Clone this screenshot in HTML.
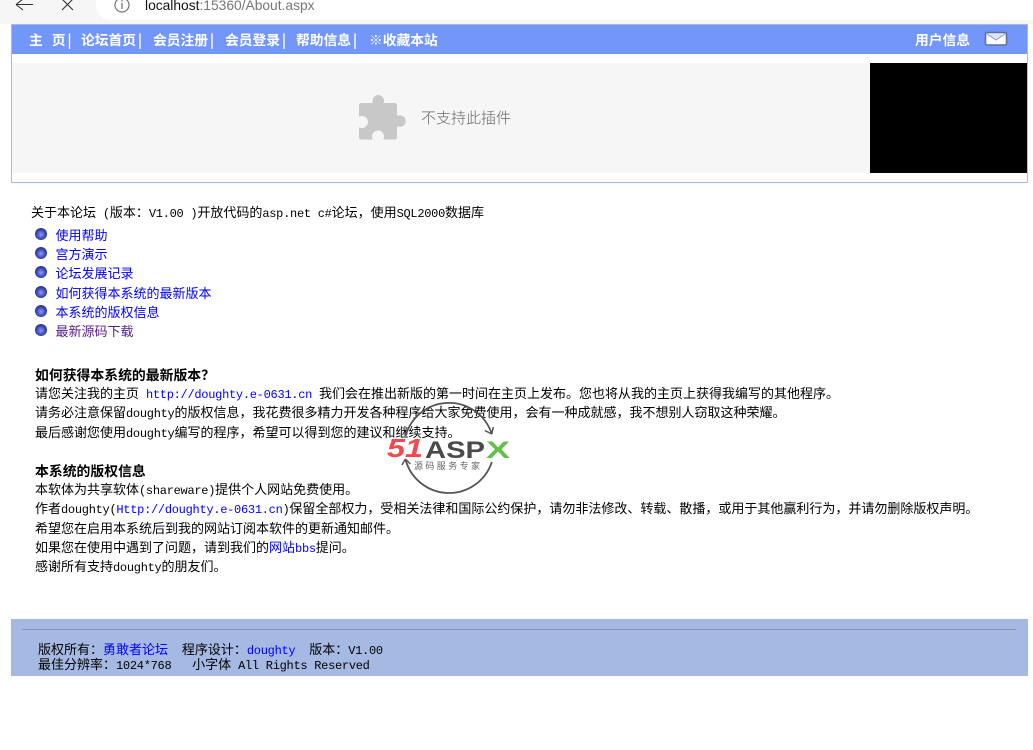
<!DOCTYPE html>
<html lang="zh-CN">
<head>
<meta charset="utf-8">
<title>About</title>
<style>
html,body{margin:0;padding:0;background:#fff;width:1033px;height:750px;overflow:hidden}
body{position:relative;font-family:"Liberation Mono","WenQuanYi Zen Hei","Noto Sans CJK SC",monospace;font-size:13px;color:#000}
.a{position:absolute;white-space:nowrap;line-height:16px;height:16px}
.c{font-family:"WenQuanYi Zen Hei","Noto Sans CJK SC",sans-serif;font-size:13px}
.m{font-family:"Liberation Mono",monospace;font-size:12px;letter-spacing:-.28px}
.t{font-size:13.85px;font-weight:bold}
a{color:#00f;text-decoration:none}
.v{color:#551a8b}
.n{position:absolute;top:31px;color:#fff;font-weight:bold;font-size:13.75px;line-height:16px;white-space:nowrap;font-family:"WenQuanYi Zen Hei","Noto Sans CJK SC",sans-serif}
.n i{font-style:normal;margin-left:2px}
.b{position:absolute;left:35px;width:12px;height:12px;border-radius:50%;background:radial-gradient(circle at 50% 55%,#8f9cf0 0,#3f4fc0 45%,#23285f 80%,#8a8a9a 100%)}
.x{position:absolute}
</style>
</head>
<body>
<div class="x" style="left:0;top:0;width:1033px;height:24px;background:#f6f6f6"></div>
<div class="x" style="left:96px;top:-10px;width:937px;height:30px;background:#fff;border-radius:14px 0 0 14px"></div>
<div class="x" style="left:0;top:24px;width:1033px;height:726px;background:#fff;border-radius:8px 8px 0 0"></div>
<svg class="x" style="left:0;top:0" width="130" height="20" viewBox="0 0 130 20"><path d="M16 4.500H33M16 4.500L23 -1M16 4.500L23 10" fill="none" stroke="#333" stroke-width="1.100"/><path d="M62 -1L73 10M73 -1L62 10" fill="none" stroke="#333" stroke-width="1.100"/><circle cx="122" cy="5" r="7" fill="none" stroke="#777" stroke-width="1.200"/><path d="M122 3V9M122 0V1.500" stroke="#777" stroke-width="1.300"/></svg>
<div class="a" style="left:145px;top:-2px;font:13.8px/16px 'Liberation Sans',sans-serif;color:#777"><span style="color:#111">localhost</span>:15360/About.aspx</div>

<div class="x" style="left:11px;top:24px;width:1015px;height:157px;border:1px solid #a5b9e3;background:#fff"></div>
<div class="x" style="left:12px;top:25px;width:1015px;height:29px;background:#7396fb"></div>
<div class="n" style="left:29px">主<span style="display:inline-block;width:9px"></span>页<i>|</i></div>
<div class="n" style="left:81px">论坛首页<i>|</i></div>
<div class="n" style="left:153px">会员注册<i>|</i></div>
<div class="n" style="left:225px">会员登录<i>|</i></div>
<div class="n" style="left:296px">帮助信息<i>|</i></div>
<div class="n" style="left:369px">※收藏本站</div>
<div class="n" style="left:915px">用户信息</div>
<svg class="x" style="left:984px;top:31px" width="24" height="15" viewBox="0 0 24 15"><rect x="1.500" y="1.500" width="21" height="12.500" rx="1.500" fill="#fff" stroke="#5f6f9f" stroke-width="1.600"/><path d="M2.500 2.500L12 9L21.500 2.500" fill="#dfe5f6" stroke="#8e9dd0"/></svg>

<div class="x" style="left:12px;top:63px;width:858px;height:110px;background:#f6f6f6"></div>
<div class="x" style="left:870px;top:63px;width:157px;height:110px;background:#000"></div>
<svg class="x" style="left:358px;top:93px" width="48" height="48" viewBox="358 93 48 48"><path d="M361.500 103H373C372.500 102 372.500 101 372.500 100A5.800 5.800 0 0 1 384 100C384 101 384 102 383.500 103H394.500C396 103 397 104 397 105.500V115.700C398 115.400 398.500 115.400 400 115.400A5.700 5.700 0 0 1 400 126.800C398.500 126.800 398 126.800 397 126.500V137C397 138.500 396 139.500 394.500 139.500H383.200A6 6 0 1 0 372.800 139.500H361.500C360 139.500 359 138.500 359 137V127.200A6 6 0 1 0 359 116.800V105.500C359 104 360 103 361.500 103Z" fill="#c8c8c8"/></svg>
<div class="a" style="left:421px;top:110px;font:15px/16px 'Noto Sans CJK SC',sans-serif;font-weight:300;color:#666">不支持此插件</div>

<div class="a c" style="left:31px;top:204px">关于本论坛<span class="m">&nbsp;(</span>版本：<span class="m">V1.00&nbsp;)</span>开放代码的<span class="m">asp.net&nbsp;c#</span>论坛，使用<span class="m">SQL2000</span>数据库</div>

<div class="b" style="top:228px"></div>
<div class="b" style="top:247px"></div>
<div class="b" style="top:266px"></div>
<div class="b" style="top:286px"></div>
<div class="b" style="top:305px"></div>
<div class="b" style="top:324px"></div>
<div class="a c" style="left:55.500px;top:227px"><a href="#">使用帮助</a></div>
<div class="a c" style="left:55.500px;top:246px"><a href="#">宫方演示</a></div>
<div class="a c" style="left:55.500px;top:265px"><a href="#">论坛发展记录</a></div>
<div class="a c" style="left:55.500px;top:285px"><a href="#">如何获得本系统的最新版本</a></div>
<div class="a c" style="left:55.500px;top:304px"><a href="#">本系统的版权信息</a></div>
<div class="a c" style="left:55.500px;top:323px"><a href="#" class="v">最新源码下载</a></div>

<div class="a c t" style="left:35px;top:366px">如何获得本系统的最新版本？</div>
<div class="a c" style="left:35px;top:385px">请您关注我的主页<span class="m">&nbsp;</span><a href="#" class="m">http://doughty.e-0631.cn</a><span class="m">&nbsp;</span>我们会在推出新版的第一时间在主页上发布。您也将从我的主页上获得我编写的其他程序。</div>
<div class="a c" style="left:35px;top:404px">请务必注意保留<span class="m">doughty</span>的版权信息，我花费很多精力开发各种程序给大家免费使用，会有一种成就感，我不想别人窃取这种荣耀。</div>
<div class="a c" style="left:35px;top:424px">最后感谢您使用<span class="m">doughty</span>编写的程序，希望可以得到您的建议和继续支持。</div>

<div class="a c t" style="left:35px;top:462px">本系统的版权信息</div>
<div class="a c" style="left:35px;top:481px">本软体为共享软体<span class="m">(shareware)</span>提供个人网站免费使用。</div>
<div class="a c" style="left:35px;top:500px">作者<span class="m">doughty(</span><a href="#" class="m">Http://doughty.e-0631.cn</a><span class="m">)</span>保留全部权力，受相关法律和国际公约保护，请勿非法修改、转载、散播，或用于其他赢利行为，并请勿删除版权声明。</div>
<div class="a c" style="left:35px;top:520px">希望您在启用本系统后到我的网站订阅本软件的更新通知邮件。</div>
<div class="a c" style="left:35px;top:539px">如果您在使用中遇到了问题，请到我们的<a href="#">网站<span class="m">bbs</span></a>提问。</div>
<div class="a c" style="left:35px;top:558px">感谢所有支持<span class="m">doughty</span>的朋友们。</div>

<svg class="x" style="left:380px;top:395px" width="140" height="105" viewBox="380 395 140 105">
<path d="M405.600 436A45 45 0 0 1 491.800 434" fill="none" stroke="#555" stroke-width="1.800"/>
<path d="M491.800 434l1.500-7M491.800 434l-7-3.500" fill="none" stroke="#555" stroke-width="1.500"/>
<path d="M491.800 462A45 45 0 0 1 405.400 459" fill="none" stroke="#555" stroke-width="1.800"/>
<path d="M405.400 459l-3.500 6M405.400 459l5 5" fill="none" stroke="#555" stroke-width="1.500"/>
<text x="387" y="457" font-family="Liberation Sans" font-size="26" font-weight="bold" font-style="italic" fill="#f04a4e" textLength="36" lengthAdjust="spacingAndGlyphs">51</text>
<text x="425" y="458" font-family="Liberation Sans" font-size="24" font-weight="bold" fill="#4a4a4a" textLength="60" lengthAdjust="spacingAndGlyphs">ASP</text>
<text x="486" y="458" font-family="Liberation Sans" font-size="24" font-weight="bold" fill="#62c04a" textLength="24" lengthAdjust="spacingAndGlyphs">X</text>
<text x="414" y="469" font-family="Noto Sans CJK SC" font-size="9" fill="#666" textLength="66">源码服务专家</text>
</svg>

<div class="x" style="left:11px;top:619px;width:1017px;height:57px;background:#a5b9e3"></div>
<div class="x" style="left:22px;top:629px;width:994px;height:1px;background:#8b93a8"></div>
<div class="a c" style="left:38px;top:641px">版权所有：<a href="#">勇敢者论坛</a><span class="m">&nbsp;&nbsp;</span>程序设计：<a href="#" class="m">doughty</a><span class="m">&nbsp;&nbsp;</span>版本：<span class="m">V1.00</span></div>
<div class="a c" style="left:38px;top:656px">最佳分辨率：<span class="m">1024*768&nbsp;&nbsp;&nbsp;</span>小字体<span class="m">&nbsp;All Rights Reserved</span></div>
</body>
</html>
